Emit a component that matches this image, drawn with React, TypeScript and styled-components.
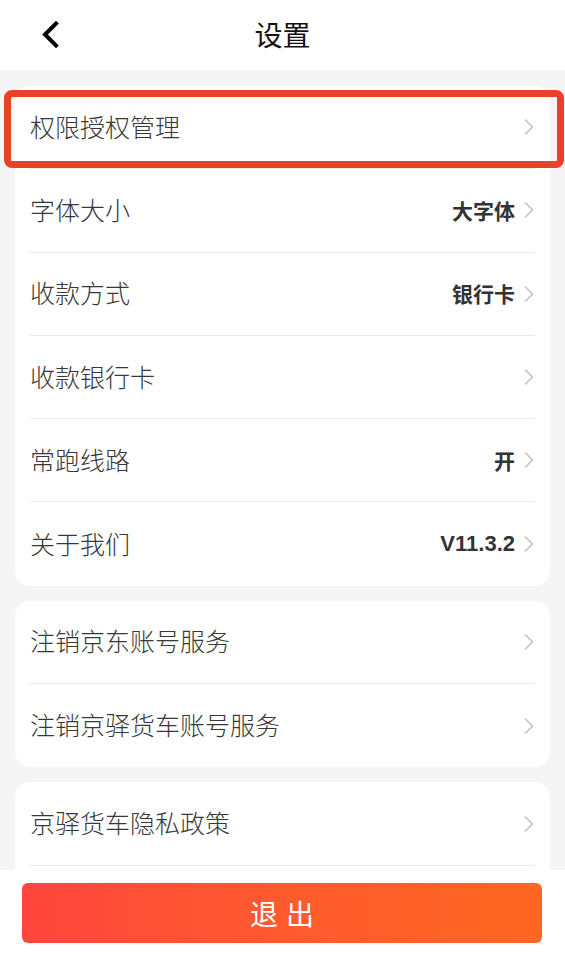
import React from "react";
import styled, { createGlobalStyle } from "styled-components";

const GlobalStyle = createGlobalStyle`
	html, body {
		margin: 0;
		padding: 0;
		background: #f5f5f5;
	}

	body {
		font-family: "Noto Sans CJK SC", "Noto Sans", sans-serif;
		-webkit-font-smoothing: antialiased;
	}
`;

const Page = styled.div`
	background: #f5f5f5;
	padding-bottom: 100px;
`;

const Header = styled.header`
	height: 70px;
	background: #fff;
	display: grid;
	grid-template-columns: 70px 1fr 70px;
	align-items: center;
`;

const BackButton = styled.button`
	border: 0;
	background: none;
	padding: 0 0 0 40px;
	height: 70px;
	display: flex;
	align-items: center;
	cursor: pointer;
`;

const Title = styled.h1`
	margin: 0;
	text-align: center;
	font-size: 28px;
	font-weight: 400;
	color: #111;
	line-height: 1;
	padding-bottom: 2px;
`;

const Content = styled.main`
	display: flex;
	flex-direction: column;
	gap: 15px;
	padding: 16px 15px 0;
`;

const Card = styled.section`
	position: relative;
	background: #fff;
	border-radius: 15px;
	padding: 0 15px;
`;

const Row = styled.div<{ $last?: boolean }>`
	height: 83.3px;
	box-sizing: border-box;
	display: flex;
	align-items: center;
	border-bottom: ${({ $last }) => ($last ? "0" : "1px solid #e9e9e9")};
`;

const Label = styled.span`
	flex: 1;
	font-size: 25px;
	font-weight: 300;
	color: #383838;
	line-height: 1;
	padding-bottom: 2px;
`;

const Value = styled.span<{ $latin?: boolean }>`
	font-size: ${({ $latin }) => ($latin ? "22px" : "21px")};
	font-weight: 700;
	color: #333;
	font-family: ${({ $latin }) =>
		$latin ? '"Liberation Sans", Arial, sans-serif' : '"Noto Sans CJK SC", sans-serif'};
	margin-right: 9px;
	line-height: 1;
`;

const Chevron = styled.svg`
	width: 11px;
	height: 18px;
	flex: none;
`;

const Highlight = styled.div`
	position: absolute;
	left: -11px;
	right: -14px;
	top: 4px;
	height: 78px;
	box-sizing: border-box;
	border: 7px solid #ea4129;
	border-radius: 8px;
	pointer-events: none;
`;

const BottomBar = styled.footer`
	position: fixed;
	left: 0;
	right: 0;
	bottom: 0;
	height: 97px;
	background: #fff;
	padding: 13px 23px 0 22px;
	box-sizing: border-box;
`;

const LogoutButton = styled.button`
	width: 100%;
	height: 60px;
	border: 0;
	border-radius: 6px;
	background: linear-gradient(90deg, #ff463d 0%, #ff5a2d 50%, #ff6721 100%);
	color: #fff;
	font-family: "Noto Sans CJK SC", sans-serif;
	font-size: 28px;
	letter-spacing: 8px;
	text-indent: 8px;
	cursor: pointer;
`;

const ArrowRight = () => (
	<Chevron viewBox="0 0 11 18">
		<path d="M1.5 2 L8.5 9 L1.5 16" fill="none" stroke="#c4c4c4" strokeWidth="1.7" strokeLinecap="round" strokeLinejoin="round" />
	</Chevron>
);

interface Item {
	label: string;
	value?: string;
	latin?: boolean;
}

const groups: Item[][] = [
	[
		{ label: "权限授权管理" },
		{ label: "字体大小", value: "大字体" },
		{ label: "收款方式", value: "银行卡" },
		{ label: "收款银行卡" },
		{ label: "常跑线路", value: "开" },
		{ label: "关于我们", value: "V11.3.2", latin: true },
	],
	[
		{ label: "注销京东账号服务" },
		{ label: "注销京驿货车账号服务" },
	],
	[
		{ label: "京驿货车隐私政策" },
		{ label: "京驿货车用户协议" },
	],
];

const App = () => (
	<Page>
		<GlobalStyle />
		<Header>
			<BackButton aria-label="返回">
				<svg width="20" height="28" viewBox="0 0 20 28">
					<path d="M16 2.5 L5 13.5 L16 24.5" fill="none" stroke="#000" strokeWidth="4" strokeLinecap="square" />
				</svg>
			</BackButton>
			<Title>设置</Title>
			<span />
		</Header>
		<Content>
			{groups.map((items, gi) => (
				<Card key={gi}>
					{gi === 0 && <Highlight />}
					{items.map((item, i) => (
						<Row key={item.label} $last={i === items.length - 1}>
							<Label>{item.label}</Label>
							{item.value && <Value $latin={item.latin}>{item.value}</Value>}
							<ArrowRight />
						</Row>
					))}
				</Card>
			))}
		</Content>
		<BottomBar>
			<LogoutButton>退出</LogoutButton>
		</BottomBar>
	</Page>
);

export default App;
